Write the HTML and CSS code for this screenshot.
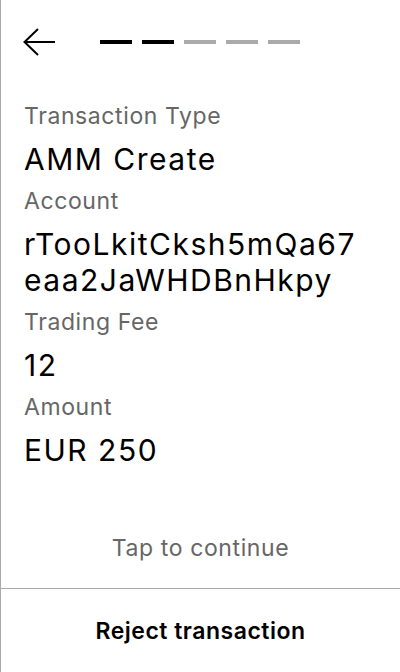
FILE: index.html
```html
<!DOCTYPE html>
<html lang="en">
<head>
<meta charset="utf-8">
<link rel="stylesheet" href="styles.css">
</head>
<body>
<div class="app">
  <header class="header">
    <button class="back" aria-label="Back">
      <svg width="34" height="30" viewBox="0 0 34 30" fill="none" stroke="#000" stroke-width="2">
        <path d="M1.5 14 H32"/>
        <path d="M15 1 L1.5 14 L15 27"/>
      </svg>
    </button>
    <div class="steps">
      <span class="step done"></span>
      <span class="step done"></span>
      <span class="step"></span>
      <span class="step"></span>
      <span class="step"></span>
    </div>
  </header>
  <main class="content">
    <div class="label">Transaction Type</div>
    <div class="value">AMM Create</div>
    <div class="label">Account</div>
    <div class="value">rTooLkitCksh5mQa67eaa2JaWHDBnHkpy</div>
    <div class="label">Trading Fee</div>
    <div class="value">12</div>
    <div class="label">Amount</div>
    <div class="value">EUR 250</div>
  </main>
  <div class="tap">Tap to continue</div>
  <footer class="footer">
    <button class="reject">Reject transaction</button>
  </footer>
</div>
</body>
</html>
```
FILE: styles.css
```css
html, body {
  margin: 0;
  padding: 0;
  background: #fff;
}
body {
  font-family: Inter, "Noto Sans", sans-serif;
  color: #000;
}
.app {
  box-sizing: border-box;
  width: 400px;
  height: 672px;
  border-left: 1px solid #aaaaaa;
  display: flex;
  flex-direction: column;
}
.header {
  height: 86px;
  display: flex;
  align-items: center;
  padding-left: 22px;
}
.back {
  border: 0;
  background: none;
  padding: 0;
  margin: 0;
  width: 34px;
  height: 30px;
  display: flex;
}
.steps {
  display: flex;
  gap: 10px;
  margin-left: 43px;
  margin-top: -2px;
}
.step {
  width: 32px;
  height: 4px;
  background: #aaaaaa;
}
.step.done {
  background: #000;
}
.content {
  flex: 1;
  padding: 16px 34px 0 23px;
}
.label {
  font-size: 23px;
  line-height: 28px;
  letter-spacing: 0.6px;
  color: #666666;
  margin-top: 10px;
}
.label:first-child {
  margin-top: 0;
}
.value {
  font-size: 30px;
  line-height: 36px;
  letter-spacing: 1.5px;
  margin-top: 11px;
  word-break: break-all;
}
.tap {
  text-align: center;
  font-size: 23px;
  line-height: 28px;
  letter-spacing: 0.6px;
  color: #666666;
  padding-bottom: 26px;
}
.footer {
  border-top: 1px solid #aaaaaa;
  height: 83px;
  display: flex;
  align-items: center;
  justify-content: center;
}
.reject {
  border: 0;
  background: none;
  font-family: Inter, "Noto Sans", sans-serif;
  font-size: 23px;
  font-weight: 600;
  letter-spacing: 0.5px;
  color: #000;
  padding: 0;
}
```
